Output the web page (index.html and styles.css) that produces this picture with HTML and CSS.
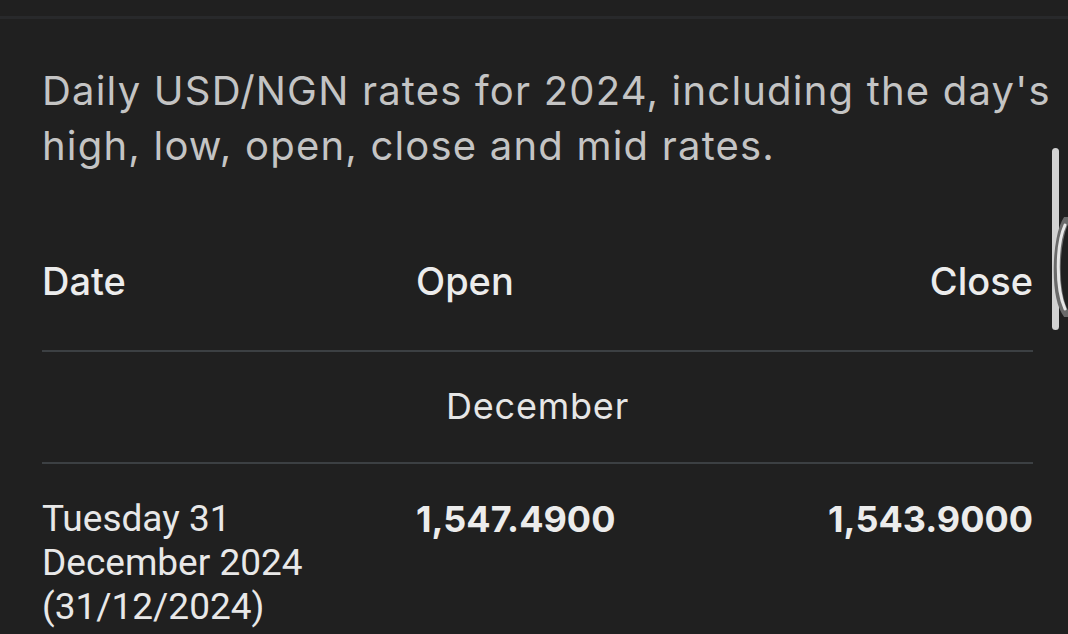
FILE: index.html
```html
<!DOCTYPE html>
<html lang="en">
<head>
<meta charset="utf-8">
<link rel="stylesheet" href="styles.css">
</head>
<body>
<div class="topbar"></div>
<main class="content">
  <p class="intro">Daily USD/NGN rates for 2024, including the day's high, low, open, close and mid rates.</p>
  <div class="table">
    <div class="row head">
      <div class="c-date">Date</div>
      <div class="c-open">Open</div>
      <div class="c-close">Close</div>
    </div>
    <div class="month">December</div>
    <div class="row data">
      <div class="c-date datetext">Tuesday 31<br>December 2024<br>(31/12/2024)</div>
      <div class="c-open num">1,547.4900</div>
      <div class="c-close num">1,543.9000</div>
    </div>
  </div>
</main>
<div class="scrollbar"></div>
<svg class="handle" width="20" height="100" viewBox="0 0 20 100">
  <path d="M18 2 C6 20 4 80 18 98" fill="none" stroke="#6a6a6a" stroke-width="7" stroke-linecap="round"/>
  <path d="M16 8 C7 28 7 72 16 92" fill="none" stroke="#e6e6e6" stroke-width="3" stroke-linecap="round"/>
</svg>
</body>
</html>
```
FILE: styles.css
```css
html, body {
  margin: 0;
  padding: 0;
  background: #202020;
  height: 100%;
  overflow: hidden;
}
body {
  font-family: "Inter", "Lato", sans-serif;
  color: #e8e8e8;
  position: relative;
}
.topbar {
  height: 16px;
  border-bottom: 3px solid #28292b;
}
.content {
  padding: 0 35px 0 42px;
}
.intro {
  margin: 44px -30px 0 0;
  font-size: 40px;
  line-height: 55px;
  color: #c4c4c4;
  letter-spacing: 1.2px;
}
.table {
  margin-top: 88px;
}
.row {
  display: flex;
}
.c-date {
  width: 374px;
}
.c-open {
  flex: 1;
}
.c-close {
  text-align: right;
}
.head {
  font-size: 38px;
  font-weight: 500;
  line-height: 40px;
  color: #ececec;
  padding-bottom: 49px;
  border-bottom: 2px solid #3c4043;
}
.month {
  text-align: center;
  font-size: 36px;
  line-height: 40px;
  letter-spacing: 0.8px;
  padding: 34px 0 36px;
  border-bottom: 2px solid #3c4043;
  color: #e6e6e6;
}
.data {
  padding-top: 33px;
}
.datetext {
  font-family: "Roboto", sans-serif;
  font-size: 37px;
  line-height: 44px;
  color: #e8e8e8;
}
.num {
  font-size: 36px;
  font-weight: 700;
  line-height: 44px;
  color: #ececec;
}
.scrollbar {
  position: absolute;
  left: 1052px;
  top: 148px;
  width: 7px;
  height: 182px;
  border-radius: 4px;
  background: #d2d2d2;
}
.handle {
  position: absolute;
  left: 1049px;
  top: 217px;
}
```
